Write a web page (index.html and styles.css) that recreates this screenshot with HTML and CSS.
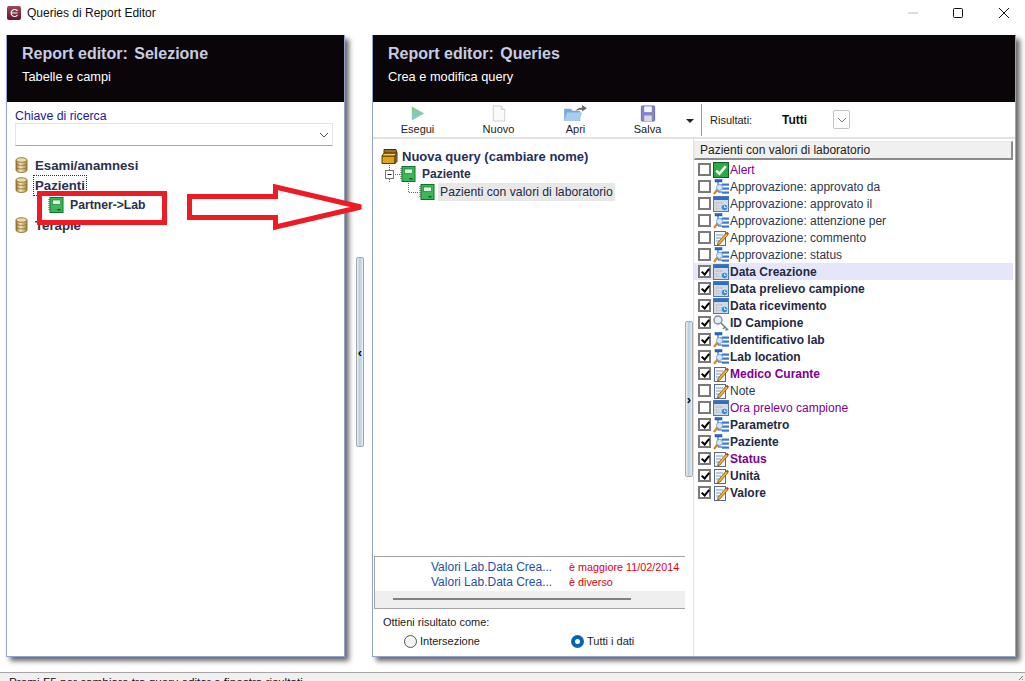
FILE: index.html
```html
<!DOCTYPE html>
<html>
	<head>
		<meta charset="utf-8">
		<title>Queries di Report Editor</title>
		<link rel="stylesheet" href="styles.css">
	</head>
	<body>

		<!-- icon set -->
		<svg class="defs" width="0" height="0">
			<defs>
				<linearGradient id="gold" x1="0" x2="1" y1="0" y2="0">
					<stop offset="0" stop-color="#9a7a34"/>
					<stop offset="0.4" stop-color="#f4e4b4"/>
					<stop offset="1" stop-color="#a88a40"/>
				</linearGradient>
				<linearGradient id="logo" x1="0" x2="0" y1="0" y2="1">
					<stop offset="0" stop-color="#a04a5c"/>
					<stop offset="1" stop-color="#64162a"/>
				</linearGradient>
				<symbol id="i-db" viewBox="0 0 13 16">
					<path d="M1 3v10c0 1.500 2.500 2.500 5.500 2.500s5.500-1 5.500-2.500V3z" fill="url(#gold)" stroke="#7a6028" stroke-width=".8"/>
					<ellipse cx="6.500" cy="3" rx="5.500" ry="2.300" fill="#ecdca0" stroke="#7a6028" stroke-width=".8"/>
					<path d="M1 7c1 1.800 10 1.800 11 0M1 10.500c1 1.800 10 1.800 11 0" fill="none" stroke="#8a7030" stroke-width=".8"/>
				</symbol>
				<symbol id="i-book" viewBox="0 0 15 16">
					<rect x="1.500" y=".5" width="13" height="15" fill="#3cb856" stroke="#0c7428"/>
					<rect x="4" y="3" width="8" height="4.500" fill="#dcf4dc" stroke="#0c7428" stroke-width=".6"/>
					<rect x="9" y="12" width="3" height="1.500" fill="#0c5a1c"/>
					<path d="M.5 2v12" stroke="#444" stroke-width="1" stroke-dasharray="1 1"/>
				</symbol>
				<symbol id="i-box" viewBox="0 0 17 17">
					<path d="M1 8h13v7.500H1z" fill="#e2a21c" stroke="#5a3c08"/>
					<path d="M1 8l2-3h13l-2 3z" fill="#f4cc58" stroke="#5a3c08"/>
					<path d="M3 5V1.500h12l1 3.500z" fill="#9a7030" stroke="#4a3008"/>
					<path d="M14 8v7.500l2-2V5z" fill="#a87010" stroke="#5a3c08"/>
				</symbol>
				<symbol id="i-check" viewBox="0 0 15 15">
					<rect x=".5" y=".5" width="14" height="14" fill="#2cac48" stroke="#0c6020"/>
					<path d="M3 8l3 3 6-7" fill="none" stroke="#fff" stroke-width="2.400"/>
				</symbol>
				<symbol id="i-tree" viewBox="0 0 16 16">
					<path d="M5 2v11M5 6h4M5 9.500h4M5 13h4" stroke="#1a50a8" fill="none"/>
					<rect x="2" y=".5" width="7" height="2.500" fill="#2a68c8" stroke="#1a50a8" stroke-width=".5"/>
					<rect x="9" y="4.500" width="7" height="2.200" fill="#3a78d0"/>
					<rect x="9" y="8.500" width="7" height="2.200" fill="#3a78d0"/>
					<rect x="9" y="12.500" width="7" height="2.200" fill="#3a78d0"/>
					<circle cx="6.500" cy="8.500" r="3" fill="#d8e8fa" stroke="#7aa4d4"/>
					<path d="M4.500 10.500L1 15" stroke="#d08a28" stroke-width="2.200"/>
				</symbol>
				<symbol id="i-date" viewBox="0 0 16 16">
					<rect x=".5" y=".5" width="15" height="15" fill="#d4d8e0" stroke="#4a78b8"/>
					<rect x="1" y="1" width="14" height="3" fill="#2a70c8"/>
					<rect x="3" y="6" width="6" height="7" fill="#b8bcc8"/>
					<path d="M3 8.500h6M3 11h6M5 6v7M7 6v7" stroke="#eef0f4" stroke-width=".6"/>
					<circle cx="11.500" cy="11.500" r="3.300" fill="#3a88d8" stroke="#fff" stroke-width=".6"/>
					<path d="M11.500 9.500v2h2" stroke="#fff" fill="none" stroke-width=".8"/>
				</symbol>
				<symbol id="i-edit" viewBox="0 0 16 16">
					<rect x="1.500" y="1.500" width="11" height="14" fill="#f4f6fa" stroke="#5a6a88"/>
					<path d="M3 5h7M3 8h5M3 11h4" stroke="#7c9cc8"/>
					<path d="M5 12.500L13 3l2 1.700-8 9.300-2.500.8z" fill="#f0b030" stroke="#704808" stroke-width=".7"/>
					<path d="M13 3l1-1.200 2 1.700-1 1.200z" fill="#d03020"/>
				</symbol>
				<symbol id="i-key" viewBox="0 0 16 16">
					<circle cx="5" cy="5" r="4" fill="#e4ecf6" stroke="#7c8ca4" stroke-width="1.400"/>
					<path d="M8 8l7 7M12 12l-2 2M14 14l-1.500 1.500" stroke="#6c7c94" stroke-width="1.600" fill="none"/>
				</symbol>
			</defs>
		</svg>

		<div class="app">
			<header class="titlebar">
				<svg class="app-logo" viewBox="0 0 14 14"><rect width="14" height="14" rx="2" fill="url(#logo)"/><path d="M10.500 5A3.500 3.500 0 1 0 10.500 9M4 7h6.500" fill="none" stroke="#fff" stroke-width="1.200"/></svg>
				<span class="title-text">Queries di Report Editor</span>
				<div class="win-btns">
					<svg class="win-min" viewBox="0 0 10 10"><path d="M0 5h10" stroke="#bbb"/></svg>
					<svg class="win-max" viewBox="0 0 10 10"><rect x=".5" y=".5" width="9" height="9" rx="1" fill="none" stroke="#111"/></svg>
					<svg class="win-close" viewBox="0 0 10 10"><path d="M0 0l10 10M10 0L0 10" stroke="#111"/></svg>
				</div>
			</header>

			<main class="workspace">
				<section class="panel panel-left">
					<div class="panel-head">
						<h1>Report editor: <span class="head-name">Selezione</span></h1>
						<p>Tabelle e campi</p>
					</div>
					<div class="panel-left-body">
						<label class="search-label">Chiave di ricerca</label>
						<div class="combo">
							<svg class="chev" viewBox="0 0 10 6"><path d="M1 1l4 4 4-4" fill="none" stroke="#555"/></svg>
						</div>
						<ul class="table-tree">
							<li class="t-row"><svg class="ic-db"><use href="#i-db"/></svg><span class="t-label">Esami/anamnesi</span></li>
							<li class="t-row"><svg class="ic-db"><use href="#i-db"/></svg><span class="t-label t-focus">Pazienti</span></li>
							<li class="t-row t-sub"><svg class="ic-16"><use href="#i-book"/></svg><span class="t-label t-small">Partner-&gt;Lab</span></li>
							<li class="t-row"><svg class="ic-db"><use href="#i-db"/></svg><span class="t-label">Terapie</span></li>
						</ul>
					</div>
				</section>

				<div class="splitter splitter-main">
					<div class="pill"><span class="pill-chev">&#8249;</span></div>
				</div>

				<section class="panel panel-right">
					<div class="panel-head">
						<h1>Report editor: <span class="head-name">Queries</span></h1>
						<p>Crea e modifica query</p>
					</div>

					<div class="toolbar">
						<div class="tool tool-esegui">
							<svg class="tool-ic" viewBox="0 0 18 18"><defs><linearGradient id="play" x1="0" x2="0" y1="0" y2="1"><stop offset="0" stop-color="#7fd07f"/><stop offset="1" stop-color="#8cc4e0"/></linearGradient></defs><path d="M2 1l14 8-14 8z" fill="url(#play)"/></svg>
							<span>Esegui</span>
						</div>
						<div class="tool tool-nuovo">
							<svg class="tool-ic" viewBox="0 0 18 18"><path d="M2.500 .5h9l4 4v13h-13z" fill="#fafafa" stroke="#ccc"/><path d="M11.500 .5v4h4" fill="#eee" stroke="#ccc"/></svg>
							<span>Nuovo</span>
						</div>
						<div class="tool tool-apri">
							<svg class="tool-ic tool-ic-wide" viewBox="0 0 24 18"><path d="M0 4h7l2 2h8v11H0z" fill="#7aa8dc"/><path d="M3 8h16l-3 9H0z" fill="#a8ccf0"/><path d="M12 6c3-3 5-3 7-3V0l5 3.500L19 7V5c-2 0-4 0-7 1z" fill="#666"/></svg>
							<span>Apri</span>
						</div>
						<div class="tool tool-salva">
							<svg class="tool-ic" viewBox="0 0 16 18"><rect x="1" y="1" width="14" height="16" rx="1" fill="#8484c8" stroke="#6a6aa8"/><rect x="4" y="1.500" width="8" height="6" fill="#f4f4fa"/><rect x="4" y="11" width="8" height="6" fill="#d8d8e8"/></svg>
							<span>Salva</span>
						</div>
						<span class="tool-more"></span>
						<span class="tool-sep"></span>
						<span class="res-label">Risultati:</span>
						<span class="res-value">Tutti</span>
						<div class="res-drop"><svg class="chev" viewBox="0 0 10 6"><path d="M1 1l4 4 4-4" fill="none" stroke="#777"/></svg></div>
					</div>

					<div class="work">
						<div class="query-col">
							<div class="query-tree">
								<div class="q-row q-root"><svg class="ic-box"><use href="#i-box"/></svg><span>Nuova query (cambiare nome)</span></div>
								<div class="q-row q-parent">
									<svg class="q-lines q-lines-a" viewBox="0 0 19 18"><path d="M8.500 0v5M8.500 14v4M12 9.500h7" stroke="#666" stroke-dasharray="1 1" fill="none"/><rect x="4.500" y="5.500" width="8" height="8" fill="#fff" stroke="#777"/><path d="M6.500 9.500h4" stroke="#223"/></svg>
									<svg class="ic-16"><use href="#i-book"/></svg><span>Paziente</span>
								</div>
								<div class="q-row q-child">
									<svg class="q-lines q-lines-b" viewBox="0 0 38 18"><path d="M27.500 0v9.500H38" stroke="#666" stroke-dasharray="1 1" fill="none"/></svg>
									<svg class="ic-16"><use href="#i-book"/></svg><span class="q-sel">Pazienti con valori di laboratorio</span>
								</div>
							</div>
							<div class="criteria">
								<div class="crit-row"><span class="crit-field">Valori Lab.Data Crea...</span><span class="crit-op">è maggiore 11/02/2014</span></div>
								<div class="crit-row"><span class="crit-field">Valori Lab.Data Crea...</span><span class="crit-op">è diverso</span></div>
								<div class="crit-scroll"><span class="crit-thumb"></span></div>
							</div>
							<div class="result-as">
								<div class="result-title">Ottieni risultato come:</div>
								<div class="radios">
									<label class="radio"><span class="dot"></span>Intersezione</label>
									<label class="radio radio-on"><span class="dot"></span>Tutti i dati</label>
								</div>
							</div>
						</div>

						<div class="splitter splitter-inner">
							<div class="pill"><span class="pill-chev">&#8250;</span></div>
						</div>

						<div class="fields-col">
							<div class="fields-head">Pazienti con valori di laboratorio</div>
							<ul class="fields">
								<li class="purple"><span class="cb"></span><svg class="ic-16"><use href="#i-check"/></svg><span>Alert</span></li>
								<li><span class="cb"></span><svg class="ic-16"><use href="#i-tree"/></svg><span>Approvazione: approvato da</span></li>
								<li><span class="cb"></span><svg class="ic-16"><use href="#i-date"/></svg><span>Approvazione: approvato il</span></li>
								<li><span class="cb"></span><svg class="ic-16"><use href="#i-tree"/></svg><span>Approvazione: attenzione per</span></li>
								<li><span class="cb"></span><svg class="ic-16"><use href="#i-edit"/></svg><span>Approvazione: commento</span></li>
								<li><span class="cb"></span><svg class="ic-16"><use href="#i-tree"/></svg><span>Approvazione: status</span></li>
								<li class="on hilite"><span class="cb"></span><svg class="ic-16"><use href="#i-date"/></svg><span>Data Creazione</span></li>
								<li class="on"><span class="cb"></span><svg class="ic-16"><use href="#i-date"/></svg><span>Data prelievo campione</span></li>
								<li class="on"><span class="cb"></span><svg class="ic-16"><use href="#i-date"/></svg><span>Data ricevimento</span></li>
								<li class="on"><span class="cb"></span><svg class="ic-16"><use href="#i-key"/></svg><span>ID Campione</span></li>
								<li class="on"><span class="cb"></span><svg class="ic-16"><use href="#i-tree"/></svg><span>Identificativo lab</span></li>
								<li class="on"><span class="cb"></span><svg class="ic-16"><use href="#i-tree"/></svg><span>Lab location</span></li>
								<li class="on purple"><span class="cb"></span><svg class="ic-16"><use href="#i-edit"/></svg><span>Medico Curante</span></li>
								<li><span class="cb"></span><svg class="ic-16"><use href="#i-edit"/></svg><span>Note</span></li>
								<li class="purple"><span class="cb"></span><svg class="ic-16"><use href="#i-date"/></svg><span>Ora prelevo campione</span></li>
								<li class="on"><span class="cb"></span><svg class="ic-16"><use href="#i-tree"/></svg><span>Parametro</span></li>
								<li class="on"><span class="cb"></span><svg class="ic-16"><use href="#i-tree"/></svg><span>Paziente</span></li>
								<li class="on purple"><span class="cb"></span><svg class="ic-16"><use href="#i-edit"/></svg><span>Status</span></li>
								<li class="on"><span class="cb"></span><svg class="ic-16"><use href="#i-edit"/></svg><span>Unità</span></li>
								<li class="on"><span class="cb"></span><svg class="ic-16"><use href="#i-edit"/></svg><span>Valore</span></li>
							</ul>
						</div>
					</div>
				</section>
			</main>

			<footer class="statusbar">
				<span>Premi F5 per cambiare tra query editor e finestra risultati</span>
				<svg class="grip" viewBox="0 0 6 6"><path d="M1 5l4-4M4 5l1-1" stroke="#777"/></svg>
			</footer>

			<!-- red annotation painted over the screenshot -->
			<svg class="markup" viewBox="0 0 1025 681">
				<rect x="39.500" y="193.500" width="125" height="29" fill="none" stroke="#ed1c24" stroke-width="5"/>
				<path d="M189.500 196.500H275.500V187L361 207L275.500 227V217.500H189.500Z" fill="#fff" stroke="#ed1c24" stroke-width="5"/>
			</svg>
		</div>

	</body>
</html>
```

FILE: styles.css
```css
html,body {
	background: white;
	margin:0;
	padding:0;
	width:100%;
	height:100%;
	overflow:hidden;
	font-family: "Liberation Sans", Arial, sans-serif;
	font-size: 12px;
	color: #1f2a44;
}

ul { list-style:none; margin:0; padding:0; }

.defs { display:block; height:0; }

.app {
	position: relative;
	width: 1025px;
	height: 681px;
	display: flex;
	flex-direction: column;
	overflow: hidden;
}

/* Title bar */
.titlebar {
	height: 26px;
	flex: none;
	display: flex;
	align-items: center;
	padding-left: 7px;
	color: #111;
}
.app-logo { width:14px; height:14px; margin-right:6px; }
.title-text { font-size: 12px; }
.win-btns {
	margin-left: auto;
	display: flex;
	align-items: center;
	padding-right: 16px;
}
.win-btns svg { width:10px; height:10px; }
.win-min { margin-right: 35px; }
.win-max { margin-right: 36px; }

/* Panels */
.workspace {
	height: 646px;
	flex: none;
	display: flex;
	box-sizing: border-box;
	padding: 9px 0 15px 6px;
}

.panel {
	box-sizing: border-box;
	border: 1px solid #94a4cc;
	border-top: 0;
	background: white;
	box-shadow: 4px 4px 5px #6a6a6a;
	display: flex;
	flex-direction: column;
}
.panel-left  { width: 339px; }
.panel-right { width: 644px; }

.panel-head {
	height: 67px;
	flex: none;
	box-sizing: border-box;
	background: #0a0508;
	padding: 10px 0 0 15px;
}
.panel-head h1 {
	margin: 0;
	font-size: 16px;
	line-height: 18px;
	font-weight: bold;
	color: #c6cde0;
}
.head-name { margin-left: 2px; }
.panel-head p {
	margin: 7px 0 0;
	font-size: 12.800px;
	line-height: 14px;
	color: #fff;
}

/* Left panel */
.panel-left-body { padding: 7px 11px 0 8px; }
.search-label { display:block; color: #1a1aa0; line-height: 14px; font-size: 12.300px; }
.combo {
	height: 23px;
	box-sizing: border-box;
	margin-top: 0;
	border: 1px solid #e4e4e4;
	border-bottom: 1px solid #a8a8a8;
	display: flex;
	align-items: center;
	justify-content: flex-end;
	padding-right: 3px;
}
.chev { width:10px; height:6px; }

.table-tree { margin-top: 9px; }
.t-row {
	height: 20px;
	display: flex;
	align-items: center;
	color: #2a3050;
}
.t-label { font-size: 13.200px; font-weight: bold; margin-left: 7px; }
.t-small { font-size: 12.200px; margin-left: 6px; }
.t-focus { outline: 1px dotted #333; margin-left: 6px; padding: 2px 1px; }
.t-sub { padding-left: 33px; }
.ic-db { width:13px; height:16px; }
.ic-16 { width:16px; height:16px; flex:none; }
.ic-box { width:17px; height:17px; flex:none; }

/* Splitters */
.splitter { flex:none; display:flex; }
.splitter-main { width: 27px; box-sizing: border-box; padding: 222px 0 0 11px; }
.splitter-inner { width: 8px; padding-top: 182px; }
.pill {
	box-sizing: border-box;
	width: 8px;
	border: 1px solid #a8a8a8;
	border-radius: 2px;
	background: linear-gradient(to right, #f0f0f0, #b4cee0 45%, #c8dcea 70%, #f0f0f0);
	display: flex;
	align-items: center;
	justify-content: center;
}
.splitter-main .pill { height: 190px; }
.splitter-inner .pill { height: 156px; }
.pill-chev { font-size: 13px; line-height: 13px; font-weight: bold; color: #000; }

/* Toolbar */
.toolbar {
	height: 37px;
	flex: none;
	display: flex;
	align-items: flex-start;
	box-sizing: border-box;
	border-bottom: 2px solid #e2e2e2;
	padding-left: 1px;
	font-size: 11px;
}
.tool {
	display: flex;
	flex-direction: column;
	align-items: center;
	height: 34px;
	padding-top: 3px;
	box-sizing: border-box;
	color: #222;
}
.tool span { line-height: 13px; margin-top: 1px; }
.tool-ic { width:16px; height:17px; flex:none; }
.tool-ic-wide { width:23px; }
.tool-esegui { width: 87px; }
.tool-nuovo  { width: 75px; }
.tool-apri   { width: 79px; }
.tool-salva  { width: 65px; }
.tool-more {
	margin: 17px 0 0 6px;
	border-left: 4px solid transparent;
	border-right: 4px solid transparent;
	border-top: 4px solid #222;
}
.tool-sep { width:1px; height:32px; margin: 2px 0 0 7px; background:#999; }
.res-label { margin: 11px 0 0 8px; width: 72px; line-height: 14px; color:#222; }
.res-value { margin-top: 10px; width: 51px; font-size: 12px; line-height:16px; font-weight:bold; color:#111; }
.res-drop {
	width: 17px;
	height: 19px;
	margin-top: 8px;
	box-sizing: border-box;
	border: 1px solid #c4c4c4;
	border-radius: 2px;
	display: flex;
	align-items: center;
	justify-content: center;
}

/* Query side */
.work { flex:1; display:flex; min-height:0; }
.query-col {
	width: 312px;
	flex: none;
	display: flex;
	flex-direction: column;
}
.query-tree { flex:1; padding: 8px 0 0 8px; }
.q-row { display:flex; align-items:center; height:18px; }
.q-root { font-size: 13px; font-weight: bold; color: #1f2f60; }
.q-root span { margin-left: 4px; }
.q-parent { font-weight: bold; color: #2a3050; }
.q-parent span { margin-left: 6px; }
.q-lines { height:18px; flex:none; }
.q-lines-a { width:19px; }
.q-lines-b { width:38px; }
.q-sel { margin-left: 3px; background: #e8e8e8; padding: 2px 2px; color: #1f2a44; line-height: 14px; font-size: 12.200px; }

.criteria {
	flex: none;
	height: 53px;
	margin-left: 1px;
	box-sizing: border-box;
	border: 1px solid #a4a4a4;
	border-right: 0;
	padding-top: 3px;
	display: flex;
	flex-direction: column;
}
.crit-row { height: 15px; display:flex; line-height: 15px; padding-left: 56px; }
.crit-field { width: 138px; color: #1f50a8; }
.crit-op { color: #e00010; font-size: 10.800px; }
.crit-scroll {
	margin-top: auto;
	height: 17px;
	background: #efefef;
	padding-left: 18px;
}
.crit-thumb { display:block; width:238px; height:2px; margin-top:7px; background:#808080; }

.result-as { height: 47px; flex:none; font-size: 11px; color:#222; box-sizing:border-box; padding: 6px 0 0 10px; }
.result-title { line-height: 14px; }
.radios { display:flex; margin: 5px 0 0 21px; }
.radio { display:flex; align-items:center; line-height: 14px; width: 167px; flex: none; }
.dot {
	width: 13px;
	height: 13px;
	box-sizing: border-box;
	border: 1px solid #555;
	border-radius: 50%;
	background: #f4f4f4;
	margin-right: 3px;
}
.radio-on .dot { border: 4px solid #0a62b8; background: #fff; }

/* Fields side */
.fields-col {
	flex: 1;
	min-width: 0;
	border-left: 1px solid #e2e2e2;
	padding-top: 2px;
}
.fields-head {
	height: 19px;
	margin-right: 2px;
	box-sizing: border-box;
	background: #f0f0f0;
	border: 1px solid #e8e8e8;
	border-right: 2px solid #8c8c8c;
	border-bottom: 2px solid #8c8c8c;
	padding-left: 5px;
	line-height: 16px;
	color: #222;
	font-size: 12px;
}
.fields { margin-top: 1px; }
.fields li {
	height: 17px;
	display: flex;
	align-items: center;
	margin-right: 2px;
	padding-left: 4px;
	color: #2e3650;
}
.fields li.on { font-weight: bold; color: #1f2a44; }
.fields li.purple { color: #800090; }
.fields li.hilite { background: #e6e6fa; }
.fields .ic-16 { margin: 0 1px 0 2px; }
.cb {
	width: 13px;
	height: 13px;
	flex: none;
	box-sizing: border-box;
	border: 2px solid #7a7a7a;
	background: #fff;
	position: relative;
}
.on .cb::after {
	content: "";
	position: absolute;
	left: 3px;
	top: 0;
	width: 3px;
	height: 6px;
	border: solid #000;
	border-width: 0 2px 2px 0;
	transform: rotate(40deg);
}

/* Status bar */
.statusbar {
	flex: none;
	height: 9px;
	box-sizing: border-box;
	border-top: 1px solid #a4a4a4;
	background: #f0f0f0;
	padding: 2px 0 0 9px;
	line-height: 14px;
	font-size: 11.750px;
	color: #111;
	overflow: hidden;
	display: flex;
}
.grip { width:6px; height:6px; flex:none; margin-left:auto; margin-right:1px; }

/* Annotation */
.markup {
	position: absolute;
	left: 0;
	top: 0;
	width: 1025px;
	height: 681px;
	pointer-events: none;
}
```
